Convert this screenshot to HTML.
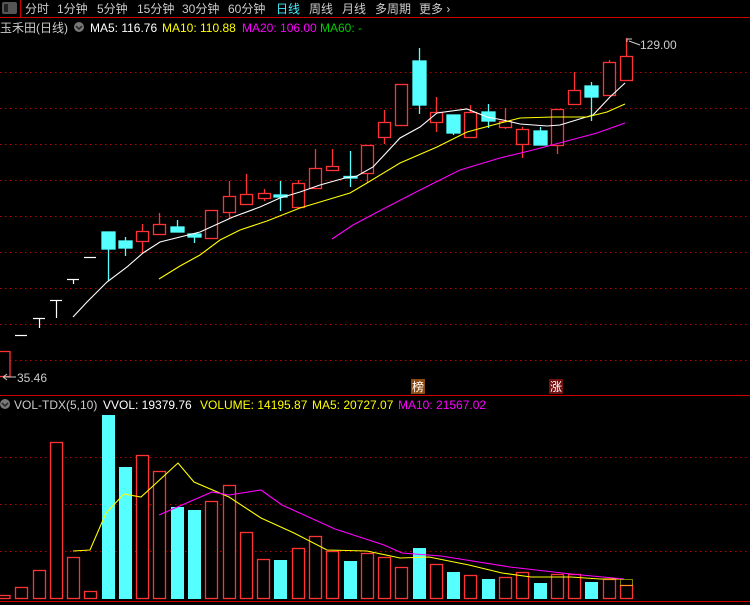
<!DOCTYPE html>
<html><head><meta charset="utf-8"><style>
html,body{margin:0;padding:0;background:#000;width:750px;height:605px;overflow:hidden}
svg{display:block}
text{font-family:"Liberation Sans","Noto Sans CJK SC",sans-serif;font-size:12px}
</style></head><body>
<svg width="750" height="605" viewBox="0 0 750 605" xmlns="http://www.w3.org/2000/svg">
<rect width="750" height="605" fill="#000"/>
<!-- top bar -->
<rect x="2" y="2" width="15" height="12" rx="2" fill="#555"/>
<rect x="4" y="4" width="4" height="8" fill="#222"/>
<line x1="20.5" y1="0" x2="20.5" y2="17" stroke="#c00"/>
<line x1="0" y1="17.5" x2="750" y2="17.5" stroke="#c00"/>
<g fill="#ccc">
<text x="25" y="13">分时</text>
<text x="57" y="13">1分钟</text>
<text x="97" y="13">5分钟</text>
<text x="137" y="13">15分钟</text>
<text x="182" y="13">30分钟</text>
<text x="228" y="13">60分钟</text>
<text x="276" y="13" fill="#4ef">日线</text>
<text x="309" y="13">周线</text>
<text x="342" y="13">月线</text>
<text x="375" y="13">多周期</text>
<text x="419" y="13">更多 ›</text>
</g>
<text x="0" y="32" fill="#ccc">玉禾田(日线)</text>
<circle cx="79" cy="27" r="5" fill="#777"/>
<path d="M76 26l3 3 3-3" stroke="#222" stroke-width="1.5" fill="none"/>
<text x="90" y="32" fill="#fff">MA5: 116.76</text>
<text x="162" y="32" fill="#ff0">MA10: 110.88</text>
<text x="242" y="32" fill="#f0f">MA20: 106.00</text>
<text x="320" y="32" fill="#0c0">MA60: -</text>
<!-- grid -->
<g stroke="#b00" stroke-dasharray="1.5 3.5">
<line x1="0" y1="72.5" x2="750" y2="72.5"/><line x1="0" y1="108.5" x2="750" y2="108.5"/>
<line x1="0" y1="144.5" x2="750" y2="144.5"/><line x1="0" y1="180.5" x2="750" y2="180.5"/>
<line x1="0" y1="216.5" x2="750" y2="216.5"/><line x1="0" y1="252.5" x2="750" y2="252.5"/>
<line x1="0" y1="288.5" x2="750" y2="288.5"/><line x1="0" y1="324.5" x2="750" y2="324.5"/>
<line x1="0" y1="360.5" x2="750" y2="360.5"/>
<line x1="0" y1="457.5" x2="750" y2="457.5"/><line x1="0" y1="504.5" x2="750" y2="504.5"/>
<line x1="0" y1="551.5" x2="750" y2="551.5"/>
</g>
<!-- white T shapes -->
<g stroke="#fff" stroke-width="1.2">
<line x1="15" y1="335.5" x2="27" y2="335.5"/>
<line x1="33" y1="318.5" x2="45" y2="318.5"/><line x1="39.5" y1="318" x2="39.5" y2="328"/>
<line x1="50" y1="300.5" x2="62" y2="300.5"/><line x1="56.5" y1="300" x2="56.5" y2="318"/>
<line x1="67" y1="279.5" x2="79" y2="279.5"/><line x1="73.5" y1="279" x2="73.5" y2="284"/>
<line x1="84" y1="257.5" x2="96" y2="257.5"/>
</g>
<!-- red candles -->
<g stroke="#ff3333" fill="#000" stroke-width="1.3">
<rect x="-3" y="351.5" width="13" height="25"/>
<line x1="142.5" y1="224" x2="142.5" y2="253"/><rect x="136.5" y="231.5" width="12" height="10"/>
<line x1="159.5" y1="213" x2="159.5" y2="234"/><rect x="153.5" y="224.5" width="12" height="10"/>
<line x1="211.5" y1="210" x2="211.5" y2="239"/><rect x="205.5" y="210.5" width="12" height="28"/>
<line x1="229.5" y1="181" x2="229.5" y2="218"/><rect x="223.5" y="196.5" width="12" height="16"/>
<line x1="246.5" y1="174" x2="246.5" y2="204"/><rect x="240.5" y="194.5" width="12" height="10"/>
<line x1="264.5" y1="189" x2="264.5" y2="201"/><rect x="258.5" y="193.5" width="12" height="5"/>
<line x1="298.5" y1="180" x2="298.5" y2="207"/><rect x="292.5" y="183.5" width="12" height="24"/>
<line x1="315.5" y1="149" x2="315.5" y2="188"/><rect x="309.5" y="168.5" width="12" height="20"/>
<line x1="332.5" y1="149" x2="332.5" y2="170"/><rect x="326.5" y="166.5" width="12" height="4"/>
<line x1="367.5" y1="145" x2="367.5" y2="183"/><rect x="361.5" y="145.5" width="12" height="28"/>
<line x1="384.5" y1="110" x2="384.5" y2="144"/><rect x="378.5" y="122.5" width="12" height="15"/>
<rect x="395.5" y="84.5" width="12" height="41"/>
<line x1="436.5" y1="97" x2="436.5" y2="132"/><rect x="430.5" y="112.5" width="12" height="10"/>
<line x1="470.5" y1="105" x2="470.5" y2="137"/><rect x="464.5" y="112.5" width="12" height="25"/>
<line x1="505.5" y1="108" x2="505.5" y2="129"/><rect x="499.5" y="121.5" width="12" height="6"/>
<line x1="522.5" y1="127" x2="522.5" y2="158"/><rect x="516.5" y="129.5" width="12" height="15"/>
<line x1="557.5" y1="109" x2="557.5" y2="154"/><rect x="551.5" y="109.5" width="12" height="36"/>
<line x1="574.5" y1="72" x2="574.5" y2="104"/><rect x="568.5" y="90.5" width="12" height="14"/>
<line x1="609.5" y1="60" x2="609.5" y2="95"/><rect x="603.5" y="62.5" width="12" height="33"/>
<line x1="626.5" y1="38" x2="626.5" y2="80"/><rect x="620.5" y="56.5" width="12" height="24"/>
</g>
<!-- cyan candles -->
<g stroke="#55ffff" fill="#55ffff" stroke-width="1.3">
<line x1="108.5" y1="232" x2="108.5" y2="281"/><rect x="102" y="232" width="13" height="17"/>
<line x1="125.5" y1="237" x2="125.5" y2="256"/><rect x="119" y="241" width="13" height="7"/>
<line x1="177.5" y1="220" x2="177.5" y2="232"/><rect x="171" y="227" width="13" height="5"/>
<line x1="194.5" y1="234" x2="194.5" y2="243"/><rect x="188" y="234" width="13" height="3"/>
<line x1="280.5" y1="181" x2="280.5" y2="211"/><rect x="274" y="195" width="13" height="2"/>
<line x1="350.5" y1="151" x2="350.5" y2="187"/><rect x="344" y="176.5" width="13" height="1.5"/>
<line x1="419.5" y1="48" x2="419.5" y2="114"/><rect x="413" y="61" width="13" height="44"/>
<line x1="453.5" y1="115" x2="453.5" y2="135"/><rect x="447" y="115" width="13" height="18"/>
<line x1="488.5" y1="104" x2="488.5" y2="128"/><rect x="482" y="112" width="13" height="9"/>
<line x1="540.5" y1="127" x2="540.5" y2="145"/><rect x="534" y="131" width="13" height="14"/>
<line x1="591.5" y1="82" x2="591.5" y2="121"/><rect x="585" y="86" width="13" height="11"/>
</g>
<!-- MA lines -->
<polyline fill="none" stroke="#fff" stroke-width="1.1" points="73,317 87,302 107,282 127,267 143,253 160,242 180,237 200,232 233,217 260,207 280,198 300,192 320,185 345,178 357,176 373,167 400,138 420,127 437,113 467,109 487,117 503,120 520,124 547,126 560,125 583,118 593,115 610,97 625,83"/>
<polyline fill="none" stroke="#ff0" stroke-width="1.1" points="159,279 180,266 200,255 220,240 240,230 267,221 300,208 320,202 350,193 367,183 400,163 437,147 467,132 493,125 520,118 553,117 587,117 607,112 625,104"/>
<polyline fill="none" stroke="#f0f" stroke-width="1.1" points="332,239 353,225 387,207 420,190 460,170 500,158 533,150 567,141 597,133 625,123"/>
<!-- labels -->
<path d="M627 42 L627 39 L632 39 M629 41 L640 45" stroke="#ccc" fill="none"/>
<text x="640" y="49" fill="#ccc">129.00</text>
<path d="M3 377 L16 377 M3 377 L7 374 M3 377 L7 380" stroke="#ccc" fill="none"/>
<text x="17" y="382" fill="#ccc">35.46</text>
<rect x="411" y="379" width="14" height="15" fill="#8a4a10"/>
<text x="412" y="391" fill="#fff" font-size="11">榜</text>
<rect x="549" y="379" width="14" height="15" fill="#701010"/>
<text x="550" y="391" fill="#fff" font-size="11">涨</text>
<line x1="0" y1="395.5" x2="750" y2="395.5" stroke="#c00"/>
<!-- volume header -->
<circle cx="5" cy="404" r="5" fill="#777"/>
<path d="M2 403l3 3 3-3" stroke="#222" stroke-width="1.5" fill="none"/>
<text x="14" y="409" fill="#ccc">VOL-TDX(5,10)</text>
<text x="103" y="409" fill="#fff">VVOL: 19379.76</text>
<text x="200" y="409" fill="#ff0">VOLUME: 14195.87</text>
<text x="312" y="409" fill="#ff0">MA5: 20727.07</text>
<text x="398" y="409" fill="#f0f">MA10: 21567.02</text>
<!-- volume bars -->
<g stroke="#ff3333" fill="#000" stroke-width="1.3">
<rect x="-3" y="595.5" width="13" height="3"/>
<rect x="15.5" y="587.5" width="12" height="11"/>
<rect x="33.5" y="570.5" width="12" height="28"/>
<rect x="50.5" y="442.5" width="12" height="156"/>
<rect x="67.5" y="557.5" width="12" height="41"/>
<rect x="84.5" y="591.5" width="12" height="7"/>
<rect x="136.5" y="455.5" width="12" height="143"/>
<rect x="153.5" y="471.5" width="12" height="127"/>
<rect x="205.5" y="501.5" width="12" height="97"/>
<rect x="223.5" y="485.5" width="12" height="113"/>
<rect x="240.5" y="532.5" width="12" height="66"/>
<rect x="257.5" y="559.5" width="12" height="39"/>
<rect x="292.5" y="548.5" width="12" height="50"/>
<rect x="309.5" y="536.5" width="12" height="62"/>
<rect x="326.5" y="551.5" width="12" height="47"/>
<rect x="361.5" y="553.5" width="12" height="45"/>
<rect x="378.5" y="557.5" width="12" height="41"/>
<rect x="395.5" y="567.5" width="12" height="31"/>
<rect x="430.5" y="564.5" width="12" height="34"/>
<rect x="464.5" y="575.5" width="12" height="23"/>
<rect x="499.5" y="577.5" width="12" height="21"/>
<rect x="516.5" y="572.5" width="12" height="26"/>
<rect x="551.5" y="574.5" width="12" height="24"/>
<rect x="568.5" y="574.5" width="12" height="24"/>
<rect x="603.5" y="579.5" width="12" height="19"/>
<rect x="620.5" y="585.5" width="12" height="13"/>
</g>
<g fill="#55ffff">
<rect x="102" y="415" width="13" height="184"/>
<rect x="119" y="467" width="13" height="132"/>
<rect x="171" y="507" width="13" height="92"/>
<rect x="188" y="510" width="13" height="89"/>
<rect x="274" y="560" width="13" height="39"/>
<rect x="344" y="561" width="13" height="38"/>
<rect x="413" y="548" width="13" height="51"/>
<rect x="447" y="572" width="13" height="27"/>
<rect x="482" y="579" width="13" height="20"/>
<rect x="534" y="583" width="13" height="16"/>
<rect x="585" y="582" width="13" height="17"/>
</g>
<polyline fill="none" stroke="#ff0" stroke-width="1.1" points="73,551 90,550 106,513 124,494 141,497 178,463 194,482 229,497 261,518 294,533 327,550 367,551 400,558 429,557 469,565 502,573 531,577 571,577 600,579 624,579"/>
<polyline fill="none" stroke="#f0f" stroke-width="1.1" points="159,515 212,492 229,495 261,490 282,505 335,529 384,545 402,553 441,556 510,567 571,574 624,579"/>
<rect x="620.5" y="579.5" width="12" height="6" fill="none" stroke="#ff0" stroke-dasharray="1 1"/>
<line x1="0" y1="601.5" x2="750" y2="601.5" stroke="#c00"/>
</svg>
</body></html>
